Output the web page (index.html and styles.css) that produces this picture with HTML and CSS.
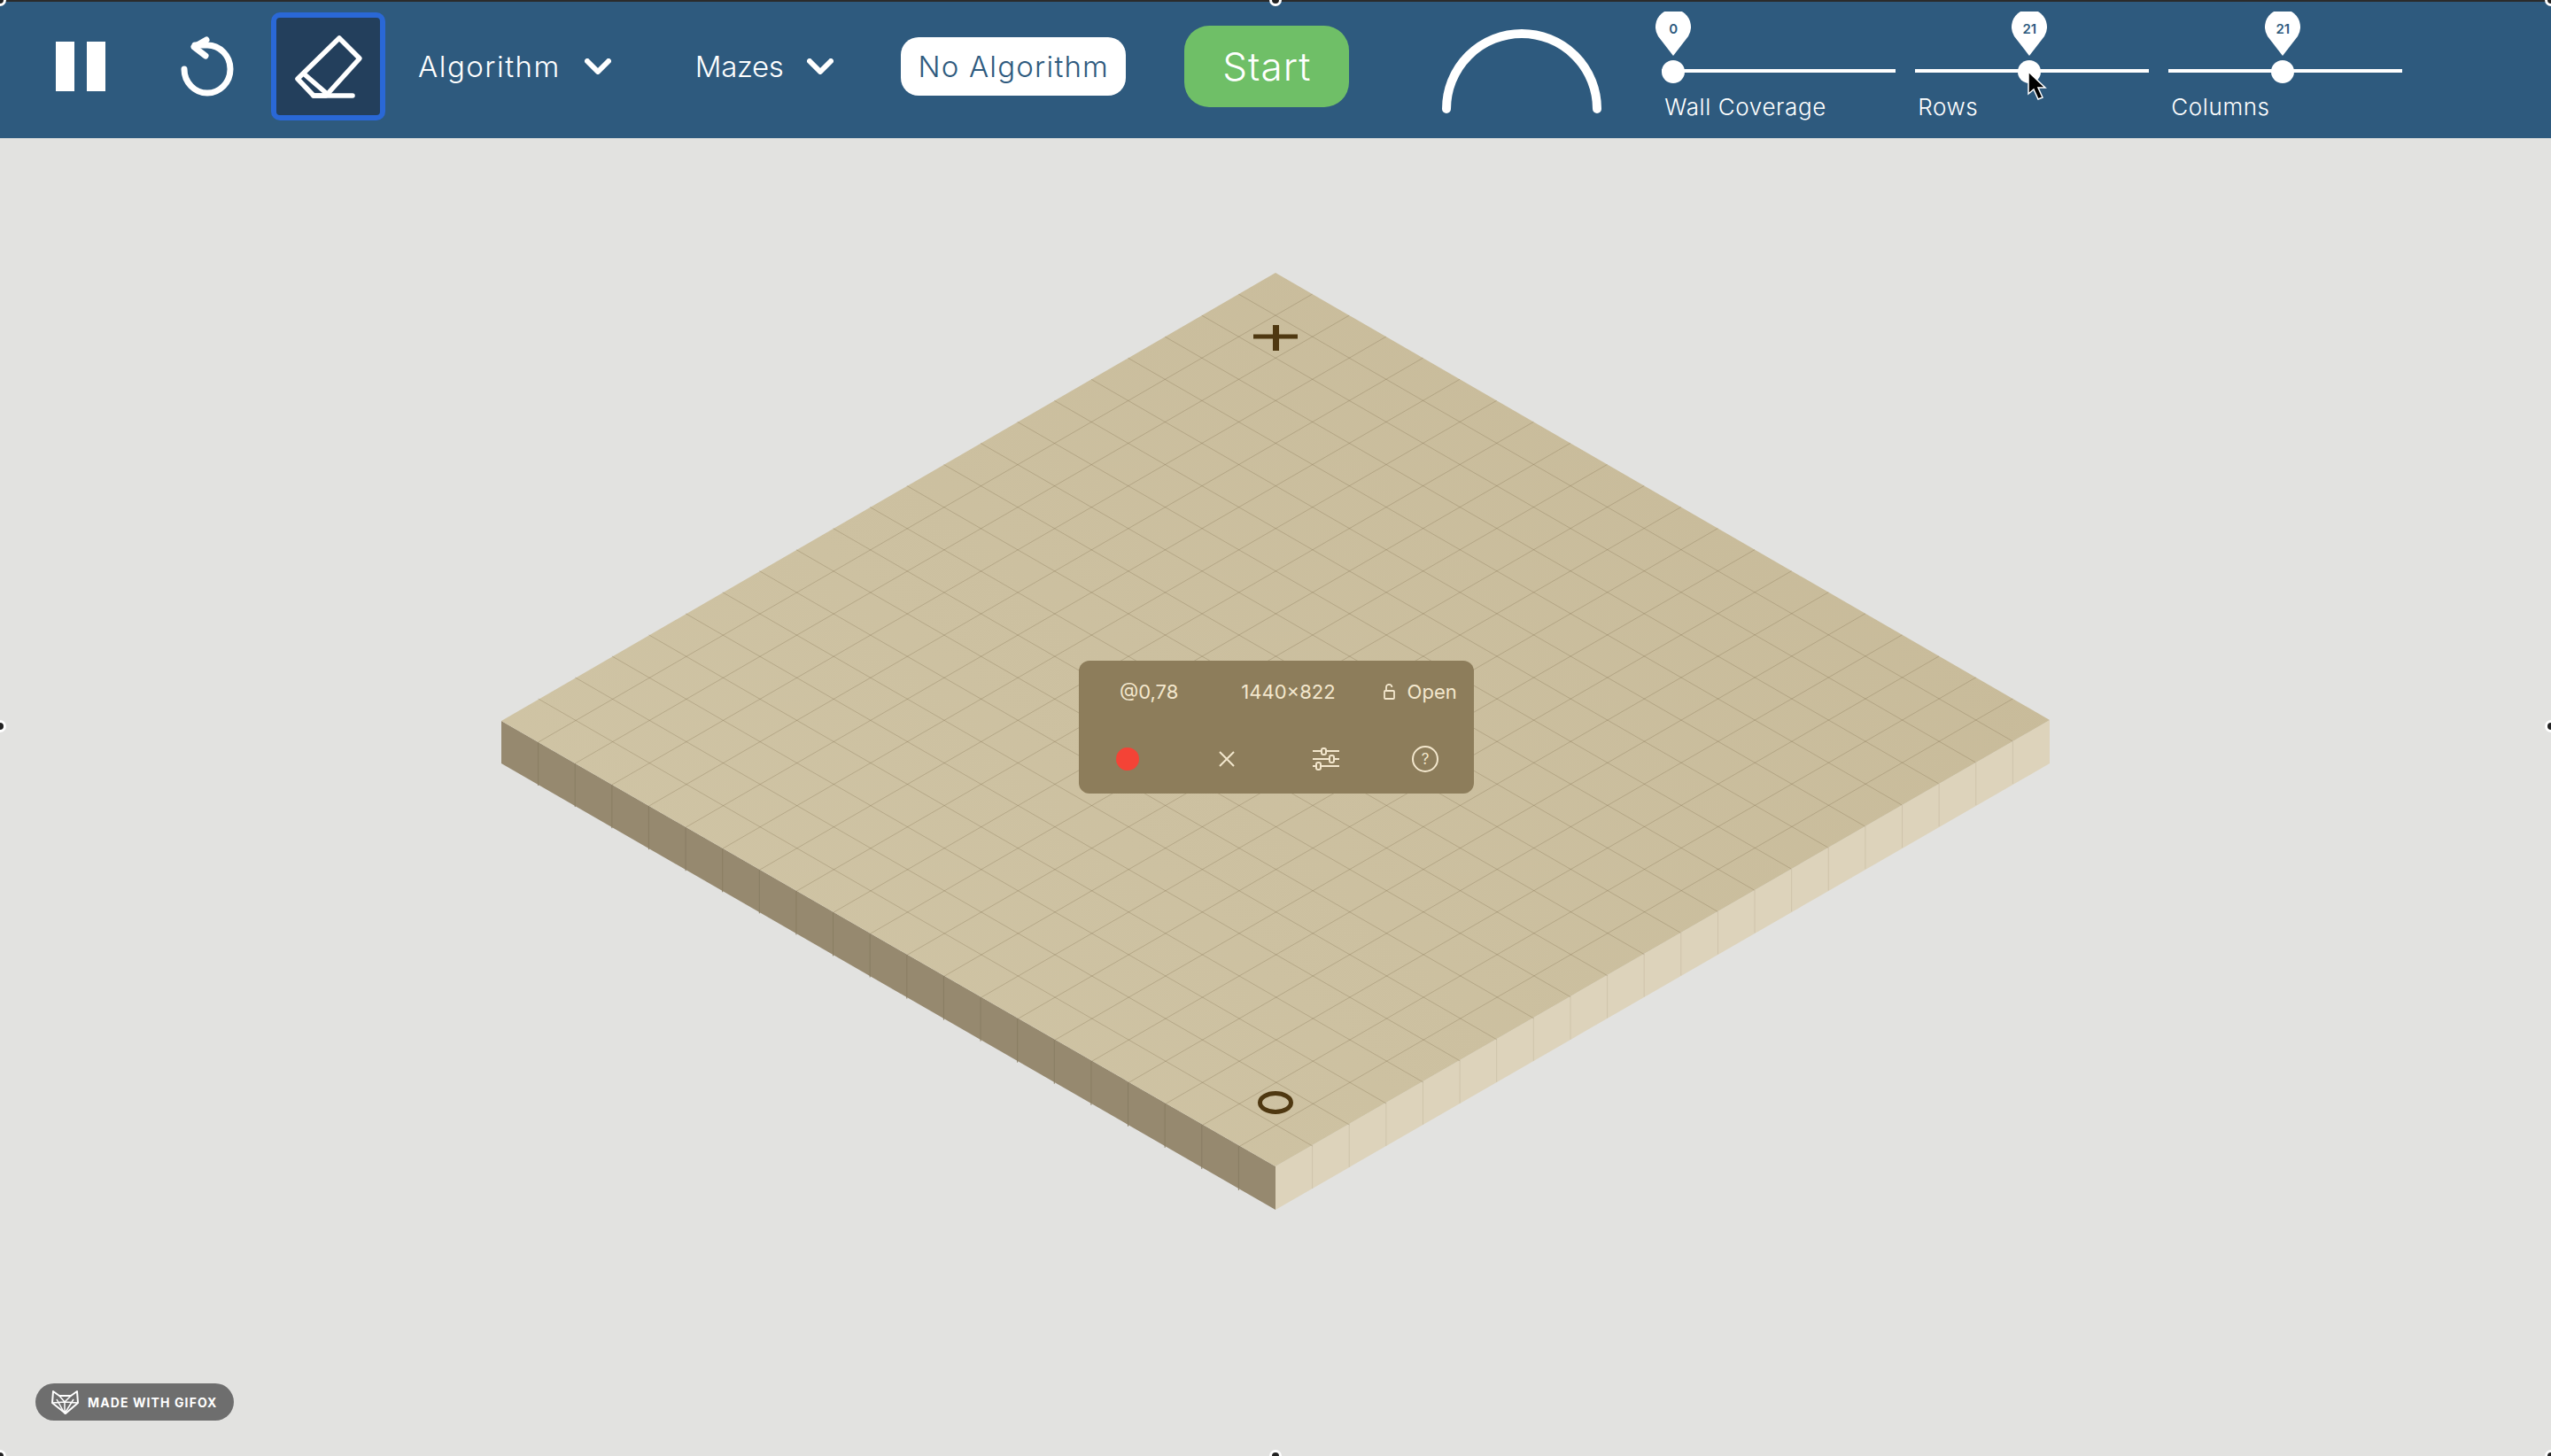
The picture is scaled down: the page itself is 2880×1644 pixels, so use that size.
FILE: index.html
```html
<!DOCTYPE html>
<html lang="en">
<head>
<meta charset="UTF-8">
<meta name="viewport" content="width=device-width, initial-scale=1.0">
<title>Pathfinding Visualizer</title>
<link rel="stylesheet" href="styles.css">
</head>
<body>

<div class="app">
    <div class="top-edge"></div>
    <header class="toolbar">
        <button class="tool tool-pause" type="button" aria-label="Pause">
            <svg width="56" height="56" viewBox="0 0 56 56"><path d="M0 0h21v56H0zM35 0h21v56H35z" fill="#fff"/></svg>
        </button>
        <button class="tool tool-undo" type="button" aria-label="Reset">
            <svg width="60" height="68" viewBox="0 0 60 68" fill="none" stroke="#fff" stroke-width="7" stroke-linecap="round" stroke-linejoin="round">
                <path d="M4 37a26 27 0 1 0 26-27H16"/>
                <path d="M29 4L15 12l13 10"/>
            </svg>
        </button>
        <button class="tool tool-eraser" type="button" aria-label="Eraser">
            <svg width="70" height="70" viewBox="0 0 70 70" fill="none" stroke="#fff" stroke-width="5.500" stroke-linecap="round" stroke-linejoin="round">
                <path d="M47 3l23 23-38 42H18L0 49z"/>
                <path d="M9 45l22 19"/>
                <path d="M18 68h44"/>
            </svg>
        </button>

        <div class="menu menu-algorithm">
            <span>Algorithm</span>
            <svg class="chevron" width="30" height="18" viewBox="0 0 30 18"><path d="M3 3l12 12L27 3" fill="none" stroke="#fff" stroke-width="6" stroke-linecap="round" stroke-linejoin="round"/></svg>
        </div>
        <div class="menu menu-mazes">
            <span>Mazes</span>
            <svg class="chevron" width="30" height="18" viewBox="0 0 30 18"><path d="M3 3l12 12L27 3" fill="none" stroke="#fff" stroke-width="6" stroke-linecap="round" stroke-linejoin="round"/></svg>
        </div>

        <div class="algo-label">No Algorithm</div>
        <button class="start-btn" type="button">Start</button>

        <svg class="speed-gauge" width="180" height="96" viewBox="0 0 180 96">
            <path d="M5 90a85 85 0 0 1 170 0" fill="none" stroke="#fff" stroke-width="10" stroke-linecap="round"/>
        </svg>

        <div class="sliders">
            <div class="slider">
                <div class="track">
                    <div class="thumb" style="left:13px">
                        <div class="pin"><svg width="40" height="50" viewBox="0 0 40 50"><path d="M20 50L3 28A20 20 0 1 1 37 28z" fill="#fff"/></svg><span>0</span></div>
                    </div>
                </div>
                <div class="slider-label">Wall Coverage</div>
            </div>
            <div class="slider">
                <div class="track">
                    <div class="thumb" style="left:129px">
                        <div class="pin"><svg width="40" height="50" viewBox="0 0 40 50"><path d="M20 50L3 28A20 20 0 1 1 37 28z" fill="#fff"/></svg><span>21</span></div>
                    </div>
                </div>
                <div class="slider-label">Rows</div>
            </div>
            <div class="slider">
                <div class="track">
                    <div class="thumb" style="left:129px">
                        <div class="pin"><svg width="40" height="50" viewBox="0 0 40 50"><path d="M20 50L3 28A20 20 0 1 1 37 28z" fill="#fff"/></svg><span>21</span></div>
                    </div>
                </div>
                <div class="slider-label">Columns</div>
            </div>
        </div>

        <svg class="cursor" width="24" height="34" viewBox="0 0 24 34">
            <path d="M2 1v25l6-5 5 11 5-2-5-11h8z" fill="#000" stroke="#fff" stroke-width="1.500"/>
        </svg>
    </header>

    <main class="stage">
        <!-- board is filled in by board.js -->
        <svg class="board" id="board" width="1748" height="1058" viewBox="566 308 1748 1058">
            <defs>
                <linearGradient id="topFill" x1="0" y1="1" x2="1" y2="0.4">
                    <stop offset="0" stop-color="#d1c6a7"/>
                    <stop offset="1" stop-color="#c8bb9a"/>
                </linearGradient>
            </defs>
            <polygon points="566,814 1440,1317 1440,1366 566,862" fill="#96896f"/>
            <polygon points="1440,1317 2314,813 2314,862 1440,1366" fill="#ddd3bb"/>
            <polygon points="1440,308 2314,813 1440,1317 566,814" fill="url(#topFill)"/>
            <g id="gridLines"></g>
            <path class="marker" d="M1415 380h50" stroke-width="5"/>
            <path class="marker" d="M1440.500 367v29" stroke-width="7"/>
            <ellipse class="marker" cx="1440" cy="1245" rx="17.500" ry="10.500" stroke-width="5"/>
        </svg>

        <div class="capture-panel">
            <div class="capture-info">
                <span class="info-pos">@0,78</span>
                <span class="info-size">1440×822</span>
                <span class="info-lock">
                    <svg width="13" height="18" viewBox="0 0 13 18" fill="none" stroke="#f3e7cd" stroke-width="1.800"><path d="M3 8V4a3.200 3.200 0 0 1 6.400 0"/><rect x="1" y="8" width="11" height="9" rx="1"/></svg>
                    Open
                </span>
            </div>
            <div class="capture-actions">
                <span class="rec-dot"></span>
                <svg class="act-close" width="18" height="18" viewBox="0 0 18 18" fill="none" stroke="#f3e7cd" stroke-width="2"><path d="M1 1l16 16M17 1L1 17"/></svg>
                <svg class="act-tune" width="30" height="26" viewBox="0 0 30 26" fill="none" stroke="#f3e7cd" stroke-width="2"><path d="M0 4h10M16 4h14M0 13h19M25 13h5M0 21h4M10 21h20"/><rect x="10" y="1" width="5" height="7" rx="2"/><rect x="19" y="9" width="5" height="8" rx="2"/><rect x="4" y="17" width="5" height="8" rx="2"/></svg>
                <span class="help-btn">?</span>
            </div>
        </div>

        <div class="gifox-badge">
            <svg width="31" height="27" viewBox="0 0 31 27" fill="none" stroke="#fff" stroke-width="1.500" stroke-linejoin="round">
                <path d="M2 1l7 5h13l7-5 1 13-14 12L1 14z" stroke-width="2"/>
                <path d="M9 6l6 7 7-7M1 14l14-1 15 1M15 13v13M6 10l9 16 10-16"/>
            </svg>
            <span>MADE WITH GIFOX</span>
        </div>
    </main>

    <span class="handle handle-tl"></span>
    <span class="handle handle-top"></span>
    <span class="handle handle-tr"></span>
    <span class="handle handle-left"></span>
    <span class="handle handle-right"></span>
    <span class="handle handle-bl"></span>
    <span class="handle handle-bottom"></span>
    <span class="handle handle-br"></span>
</div>

<script src="board.js"></script>
</body>
</html>
```

FILE: styles.css
```css
html, body {
    margin: 0;
    padding: 0;
}
body {
    font-family: Inter, "Liberation Sans", sans-serif;
    background-color: #e2e2e0;
}
button {
    padding: 0;
    border: none;
    background: none;
    font-family: inherit;
    cursor: pointer;
}
.app {
    position: relative;
    display: flex;
    flex-direction: column;
    width: 2880px;
    height: 1644px;
    overflow: hidden;
}
.top-edge {
    flex-shrink: 0;
    height: 2px;
    background-color: #2b2b2b;
}

/* toolbar */
.toolbar {
    position: relative;
    display: flex;
    align-items: center;
    flex-shrink: 0;
    box-sizing: border-box;
    height: 154px;
    padding: 0 0 8px 63px;
    background-color: #2e5a7e;
    color: #fff;
}
.tool {
    display: flex;
    align-items: center;
    justify-content: center;
}
.tool svg {
    overflow: visible;
}
.tool-undo {
    margin-left: 85px;
}
.tool-eraser {
    box-sizing: border-box;
    width: 129px;
    height: 122px;
    margin-left: 42px;
    background-color: #233f5c;
    border: 6px solid #2a68d6;
    border-radius: 10px;
}
.menu {
    display: flex;
    align-items: center;
    gap: 27px;
    font-size: 33px;
    font-weight: 300;
}
.menu-algorithm {
    margin-left: 37px;
    letter-spacing: 1.5px;
}
.menu-mazes {
    margin-left: 95px;
    letter-spacing: -0.4px;
}
.algo-label {
    display: flex;
    align-items: center;
    justify-content: center;
    width: 254px;
    height: 66px;
    margin-left: 76px;
    background-color: #fff;
    border-radius: 20px;
    color: #2e5a7e;
    font-size: 33px;
    font-weight: 300;
    letter-spacing: 1.2px;
}
.start-btn {
    width: 186px;
    height: 92px;
    margin-left: 66px;
    background-color: #6fbf67;
    border-radius: 28px;
    color: #fff;
    font-size: 44px;
    font-weight: 300;
    letter-spacing: 1px;
}
.speed-gauge {
    margin-top: 12px;
    margin-left: 105px;
}

/* sliders */
.sliders {
    display: flex;
    gap: 22px;
    align-self: flex-start;
    margin-left: 68px;
    padding-top: 66px;
}
.slider {
    width: 264px;
}
.track {
    position: relative;
    height: 26px;
}
.track::before {
    content: "";
    position: absolute;
    top: 10px;
    left: 0;
    right: 0;
    height: 4px;
    background-color: #fff;
}
.thumb {
    position: absolute;
    top: 0;
    width: 26px;
    height: 26px;
    margin-left: -13px;
    background-color: #fff;
    border-radius: 50%;
}
.pin {
    position: absolute;
    top: -55px;
    left: -7px;
    width: 40px;
    height: 50px;
}
.pin svg {
    display: block;
}
.pin span {
    position: absolute;
    top: 11px;
    left: 0;
    right: 0;
    color: #2e5a7e;
    font-size: 15px;
    font-weight: 600;
    line-height: 18px;
    text-align: center;
}
.slider-label {
    margin-top: 12px;
    padding-left: 3px;
    font-size: 26px;
    font-weight: 300;
    letter-spacing: 0.6px;
    line-height: 30px;
}
.cursor {
    position: absolute;
    top: 78px;
    left: 2288px;
}

/* board */
.stage {
    position: relative;
    flex: 1;
    display: flex;
    justify-content: center;
    align-items: flex-start;
    padding-top: 152px;
}
.board {
    display: block;
}
.marker {
    fill: none;
    stroke: #4f3811;
}

/* capture panel on top of the board */
.capture-panel {
    position: absolute;
    top: 590px;
    left: 1218px;
    box-sizing: border-box;
    width: 446px;
    height: 150px;
    background-color: #8d7d5b;
    border-radius: 12px;
    color: #f3e7cd;
    font-size: 22px;
}
.capture-info {
    display: flex;
    align-items: center;
    height: 24px;
    padding: 23px 0 0 46px;
}
.info-size {
    margin-left: 71px;
}
.info-lock {
    display: flex;
    align-items: center;
    gap: 14px;
    margin-left: 54px;
}
.capture-actions {
    display: flex;
    align-items: center;
    box-sizing: border-box;
    height: 32px;
    margin-top: 48px;
    padding-left: 42px;
}
.rec-dot {
    width: 26px;
    height: 26px;
    background-color: #f44336;
    border-radius: 50%;
}
.act-close {
    margin-left: 90px;
}
.act-tune {
    margin-left: 88px;
}
.help-btn {
    box-sizing: border-box;
    width: 30px;
    height: 30px;
    margin-left: 82px;
    border: 2px solid #f3e7cd;
    border-radius: 50%;
    font-size: 17px;
    line-height: 26px;
    text-align: center;
}

/* gifox watermark */
.gifox-badge {
    position: absolute;
    left: 40px;
    bottom: 40px;
    display: flex;
    align-items: center;
    gap: 10px;
    box-sizing: border-box;
    width: 224px;
    height: 42px;
    padding-left: 18px;
    background-color: #6e6e6e;
    border-radius: 21px;
    color: #fff;
    font-size: 14px;
    font-weight: 700;
    letter-spacing: 1.1px;
    white-space: nowrap;
}

/* selection handles on the recording frame */
.handle {
    position: absolute;
    width: 8px;
    height: 8px;
    background-color: #222;
    border: 3px solid #fff;
    border-radius: 50%;
}
.handle-tl {
    top: -7px;
    left: -7px;
}
.handle-top {
    top: -7px;
    left: 1433px;
}
.handle-tr {
    top: -7px;
    right: -7px;
}
.handle-left {
    top: 813px;
    left: -7px;
}
.handle-right {
    top: 813px;
    right: -7px;
}
.handle-bl {
    bottom: -7px;
    left: -7px;
}
.handle-bottom {
    bottom: -7px;
    left: 1433px;
}
.handle-br {
    bottom: -7px;
    right: -7px;
}
```

FILE: board.js
```js
// draws the 21x21 cell lines on the board
const CELLS = 21;
const TOP = { x: 1440, y: 308 };
const LEFT = { x: 566, y: 814 };
const RIGHT = { x: 2314, y: 813 };
const BOTTOM = { x: 1440, y: 1317 };
const DEPTH = 49;

const gridLines = document.getElementById('gridLines');

function addLine(x1, y1, x2, y2, color) {
    const line = document.createElementNS('http://www.w3.org/2000/svg', 'line');
    line.setAttribute('x1', x1);
    line.setAttribute('y1', y1);
    line.setAttribute('x2', x2);
    line.setAttribute('y2', y2);
    line.setAttribute('stroke', color);
    line.setAttribute('stroke-width', 1);
    gridLines.appendChild(line);
}

const stepX = (RIGHT.x - TOP.x) / CELLS;
const stepY = (RIGHT.y - TOP.y) / CELLS;

for (let i = 1; i < CELLS; i++) {
    const dx = stepX * i;
    const dy = stepY * i;

    // top face
    addLine(TOP.x - dx, TOP.y + dy, RIGHT.x - dx, RIGHT.y + dy, 'rgba(120, 100, 70, 0.28)');
    addLine(TOP.x + dx, TOP.y + dy, LEFT.x + dx, LEFT.y + dy, 'rgba(120, 100, 70, 0.28)');

    // side faces
    addLine(LEFT.x + dx, LEFT.y + dy, LEFT.x + dx, LEFT.y + dy + DEPTH, '#897d63');
    addLine(BOTTOM.x + dx, BOTTOM.y - dy, BOTTOM.x + dx, BOTTOM.y - dy + DEPTH, '#cfc4ab');
}
```
